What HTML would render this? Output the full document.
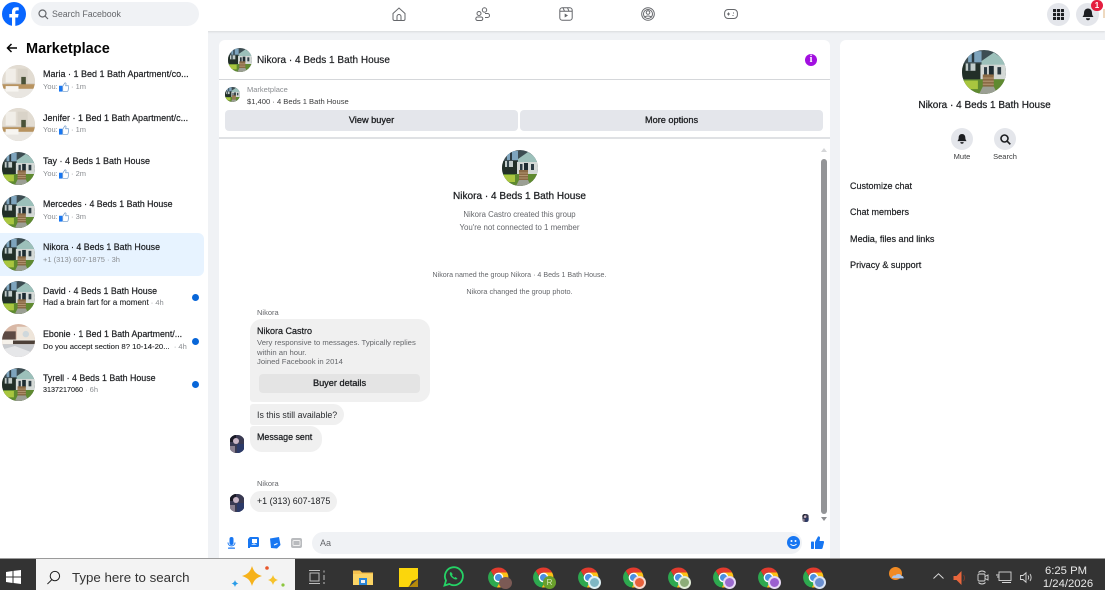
<!DOCTYPE html>
<html><head><meta charset="utf-8"><style>
*{box-sizing:border-box}
html{margin:0;padding:0;width:1105px;height:590px;overflow:hidden;background:#f0f2f5}
body{margin:0;padding:0;width:1105px;height:590px;overflow:hidden;background:#f0f2f5;position:relative;font-family:"Liberation Sans",sans-serif;color:#1c1e21;filter:blur(.3px)}
.a{position:absolute;white-space:nowrap}
.p{position:absolute;background:#fff}
.b{font-weight:400;-webkit-text-stroke:.2px currentColor}
.t{font-size:8.85px;line-height:12px;color:#1c1e21;-webkit-text-stroke:.2px #1c1e21}
.s{font-size:7.5px;line-height:10px;color:#8a8d91}
.s b{font-weight:400;color:#1c1e21;-webkit-text-stroke:.1px #1c1e21}
.c{text-align:center}
.g{color:#65676b}
.av{position:absolute;border-radius:50%;overflow:hidden}
.av svg{display:block;width:100%;height:100%}
.dot{position:absolute;width:7px;height:7px;border-radius:50%;background:#0866d8;left:192px}
.ic{position:absolute;overflow:visible}
.chr{position:absolute;top:567px;width:21px;height:21px}
.btn{font-size:9.2px;-webkit-text-stroke:.3px #1c1e21}
</style></head><body>
<svg width="0" height="0" style="position:absolute"><defs>
<symbol id="house" viewBox="0 0 36 36"><rect width="36" height="36" fill="#3d4d52"/><rect x="5" y="1" width="11" height="9" fill="#7ea4bd"/><rect x="8" y="1" width="2" height="9" fill="#2c3a40"/><path d="M16 9 26 2 36 9V13H16Z" fill="#9cc0ba"/><rect x="15" y="12" width="21" height="12" fill="#d4d9d6"/><rect x="0" y="11" width="15" height="13" fill="#222f28"/><rect x="3" y="11" width="8" height="6" fill="#c2ccca"/><rect x="5" y="11" width="2" height="6" fill="#33444a"/><rect x="18" y="14" width="2.500" height="7" fill="#2d3c44"/><rect x="22" y="13" width="4" height="8" fill="#1e2c32"/><rect x="29" y="14" width="3" height="6" fill="#2d3c44"/><rect y="24" width="36" height="12" fill="#5f8a30"/><rect x="0" y="25" width="13" height="7" fill="#a9c63f"/><rect x="17" y="20" width="9" height="10" fill="#8a6a45"/><path d="M17 23h9M17 25.500h9M17 28h9" stroke="#bda27e" stroke-width=".7"/><path d="M17 30h9l3 6H14Z" fill="#9b9f94"/></symbol>
<symbol id="room" viewBox="0 0 36 36"><rect width="36" height="36" fill="#cfc8bc"/><rect x="0" y="0" width="36" height="20" fill="#e2dcd2"/><rect x="4" y="4" width="11" height="15" fill="#f1eee8"/><rect x="17" y="4" width="11" height="15" fill="#d9d3c8"/><rect x="21" y="13" width="5" height="9" fill="#4a5238"/><rect y="21" width="36" height="5" fill="#b8935f"/><path d="M0 26h36v10H0Z" fill="#e9e6e1"/><rect x="4" y="23" width="14" height="6" fill="#f7f5f1"/></symbol>
<symbol id="room2" viewBox="0 0 36 36"><rect width="36" height="36" fill="#d9b8a6"/><rect x="16" y="3" width="20" height="18" fill="#eee5da"/><rect x="0" y="8" width="15" height="10" fill="#5d4a44"/><circle cx="26" cy="11" r="3.500" fill="#cfd8dc"/><rect x="0" y="17" width="36" height="5" fill="#f5f1ea"/><rect x="12" y="18" width="24" height="4" fill="#4c4038"/><rect y="22" width="36" height="14" fill="#c9ccd0"/><path d="M0 28 14 24 30 30 36 36H0Z" fill="#e6e7e9"/></symbol>
<symbol id="like" viewBox="0 0 12 11"><rect x="0" y="4" width="4" height="7" fill="#1877f2"/><path d="M4.500 4.500 7 .6c1-.3 1.700.4 1.400 1.400L8 4h3c.6 0 .9.500.8 1l-1 5c-.1.400-.4.700-.8.700H4.500Z" fill="#fff" stroke="#6a96c8" stroke-width=".8"/></symbol>
<symbol id="face" viewBox="0 0 14 18"><rect width="14" height="18" fill="#3a3a52"/><rect x="0" y="0" width="6" height="7" fill="#1b1b26"/><circle cx="6" cy="6" r="3" fill="#c9b6c6"/><rect x="7" y="9" width="7" height="9" fill="#2c3a68"/><rect x="0" y="11" width="5" height="7" fill="#8a8090"/></symbol>
<symbol id="chrome" viewBox="0.500 0.500 19 19"><path d="M10 1a9 9 0 0 1 7.800 4.500H10a4.500 4.500 0 0 0-4.200 3L3 4A9 9 0 0 1 10 1Z" fill="#e33b2e"/><path d="M3 4l4.400 7.600A4.500 4.500 0 0 0 11 14.400L8.500 19A9 9 0 0 1 3 4Z" fill="#2da94f"/><path d="M17.800 5.500A9 9 0 0 1 8.500 18.900L13 11a4.500 4.500 0 0 0-3-5.500Z" fill="#fbc116"/><circle cx="10" cy="10" r="3.800" fill="#4a90e2" stroke="#fff" stroke-width="1.200"/></symbol>
</defs></svg>

<!-- top bar -->
<div class="p" style="left:0;top:0;width:1105px;height:31px;box-shadow:0 1px 2px rgba(0,0,0,.1)"></div>
<svg class="ic" style="left:2px;top:2px" width="24" height="24" viewBox="0 0 24 24"><circle cx="12" cy="12" r="12" fill="#0866ff"/><path d="M10 24v-8.500H7.300V12H10v-2.200c0-3 1.500-4.600 4.400-4.600.9 0 1.700.1 2.300.2v3h-1.500c-1.500 0-1.900.8-1.900 1.900V12h3.300l-.6 3.500h-2.700V24Z" fill="#fff"/></svg>
<div class="p" style="left:31px;top:2px;width:168px;height:24px;border-radius:12px;background:#f0f2f5"></div>
<svg class="ic" style="left:38px;top:9px" width="11" height="11" viewBox="0 0 11 11" fill="none" stroke="#65676b" stroke-width="1.200"><circle cx="4.500" cy="4.500" r="3.500"/><path d="M7 7l3 3"/></svg>
<div class="a" style="left:52px;top:8px;font-size:8.800px;line-height:12px;color:#65676b">Search Facebook</div>

<svg class="ic" style="left:392px;top:7px" width="14" height="14" viewBox="0 0 14 14" fill="none" stroke="#65676b" stroke-width="1"><path d="M1 6.500 7 1l6 5.500V12a1.500 1.500 0 0 1-1.500 1.500h-9A1.500 1.500 0 0 1 1 12Z"/><path d="M5 13.500V9.500a2 2 0 0 1 4 0v4"/></svg>
<svg class="ic" style="left:475px;top:7px" width="15" height="14" viewBox="0 0 15 14" fill="none" stroke="#65676b" stroke-width="1"><circle cx="9.500" cy="3" r="2.200"/><circle cx="4" cy="6.500" r="2"/><rect x=".8" y="10" width="7" height="3.500" rx="1.700"/><path d="M10 6.500h2.500a2 2 0 0 1 0 4H10"/></svg>
<svg class="ic" style="left:559px;top:7px" width="14" height="14" viewBox="0 0 14 14" fill="none" stroke="#65676b" stroke-width="1"><rect x=".8" y=".8" width="12.400" height="12.400" rx="2.500"/><path d="M.8 4.200h12.400M4 .8l1.500 3.400M8.500 .8 10 4.200"/><path d="M5.700 6.500v4l3.300-2Z" fill="#65676b" stroke="none"/></svg>
<svg class="ic" style="left:641px;top:7px" width="14" height="14" viewBox="0 0 14 14" fill="none" stroke="#65676b" stroke-width="1"><circle cx="7" cy="7" r="6.300"/><circle cx="7" cy="7" r="4.500"/><circle cx="7" cy="5.500" r="1.800"/><path d="M3.500 10.500c1-2 6-2 7 0"/></svg>
<svg class="ic" style="left:724px;top:8px" width="14" height="12" viewBox="0 0 14 12" fill="none" stroke="#65676b" stroke-width="1"><rect x=".6" y="1.500" width="12.800" height="9" rx="3.500"/><path d="M3 6h3M4.500 4.500v3M9 5h1M8.500 7.500h1"/></svg>

<div class="p" style="left:1047px;top:3px;width:23px;height:23px;border-radius:50%;background:#e4e6eb"></div>
<svg class="ic" style="left:1053px;top:9px" width="11" height="11" viewBox="0 0 10 10" fill="#1c1e21"><rect width="2.800" height="2.800" rx=".4"/><rect x="3.600" width="2.800" height="2.800" rx=".4"/><rect x="7.200" width="2.800" height="2.800" rx=".4"/><rect y="3.600" width="2.800" height="2.800" rx=".4"/><rect x="3.600" y="3.600" width="2.800" height="2.800" rx=".4"/><rect x="7.200" y="3.600" width="2.800" height="2.800" rx=".4"/><rect y="7.200" width="2.800" height="2.800" rx=".4"/><rect x="3.600" y="7.200" width="2.800" height="2.800" rx=".4"/><rect x="7.200" y="7.200" width="2.800" height="2.800" rx=".4"/></svg>
<div class="p" style="left:1076px;top:3px;width:23px;height:23px;border-radius:50%;background:#e4e6eb"></div>
<svg class="ic" style="left:1082px;top:8px" width="12" height="13" viewBox="0 0 12 13"><path d="M6 .5c2.600 0 4 2 4 4.500 0 2 .8 3 1.500 4H.5C1.200 8 2 7 2 5 2 2.500 3.400.500 6 .5Z M4 10.200h4a2 2 0 0 1-4 0Z" fill="#1c1e21"/></svg>
<div class="p c" style="left:1091px;top:0;width:12px;height:11px;border-radius:6px;background:#e41e3f;color:#fff;font-size:8px;line-height:11px;font-weight:700">1</div>
<div class="p" style="left:1103px;top:9px;width:2px;height:9px;background:#eed9c0"></div>

<!-- sidebar -->
<div class="p" style="left:0;top:31px;width:208px;height:527px"></div>
<svg class="ic" style="left:6px;top:43px" width="11" height="10" viewBox="0 0 11 10" fill="none" stroke="#050505" stroke-width="1.500"><path d="M11 5H1.500M5.500 1 1.500 5l4 4"/></svg>
<div class="a b" style="left:26px;top:40px;font-size:14.500px;line-height:18px;color:#050505;font-weight:700;-webkit-text-stroke:0">Marketplace</div>

<div class="av" style="left:2px;top:65px;width:33px;height:33px"><svg><use href="#room"/></svg></div>
<div class="a t" style="left:43px;top:68px;font-size:9px">Maria · 1 Bed 1 Bath Apartment/co...</div>
<div class="a s" style="left:43px;top:82px">You:</div><svg class="ic" style="left:59px;top:82px" width="10" height="10"><use href="#like"/></svg><div class="a s" style="left:71px;top:82px">· 1m</div>

<div class="av" style="left:2px;top:108px;width:33px;height:33px"><svg><use href="#room"/></svg></div>
<div class="a t" style="left:43px;top:112px;font-size:9px">Jenifer · 1 Bed 1 Bath Apartment/c...</div>
<div class="a s" style="left:43px;top:125px">You:</div><svg class="ic" style="left:59px;top:125px" width="10" height="10"><use href="#like"/></svg><div class="a s" style="left:71px;top:125px">· 1m</div>

<div class="av" style="left:2px;top:152px;width:33px;height:33px"><svg><use href="#house"/></svg></div>
<div class="a t" style="left:43px;top:155px;font-size:9px">Tay · 4 Beds 1 Bath House</div>
<div class="a s" style="left:43px;top:169px">You:</div><svg class="ic" style="left:59px;top:169px" width="10" height="10"><use href="#like"/></svg><div class="a s" style="left:71px;top:169px">· 2m</div>

<div class="av" style="left:2px;top:195px;width:33px;height:33px"><svg><use href="#house"/></svg></div>
<div class="a t" style="left:43px;top:198px;font-size:8.800px">Mercedes · 4 Beds 1 Bath House</div>
<div class="a s" style="left:43px;top:212px">You:</div><svg class="ic" style="left:59px;top:212px" width="10" height="10"><use href="#like"/></svg><div class="a s" style="left:71px;top:212px">· 3m</div>

<div class="p" style="left:0;top:233px;width:204px;height:43px;border-radius:0 6px 6px 0;background:#e7f3ff"></div>
<div class="av" style="left:2px;top:238px;width:33px;height:33px"><svg><use href="#house"/></svg></div>
<div class="a t" style="left:43px;top:241px">Nikora · 4 Beds 1 Bath House</div>
<div class="a s" style="left:43px;top:255px">+1 (313) 607-1875 · 3h</div>

<div class="av" style="left:2px;top:281px;width:33px;height:33px"><svg><use href="#house"/></svg></div>
<div class="a t" style="left:43px;top:285px">David · 4 Beds 1 Bath House</div>
<div class="a s" style="left:43px;top:298px"><b style="font-size:8.100px">Had a brain fart for a moment</b> · 4h</div>
<div class="dot" style="top:294px"></div>

<div class="av" style="left:2px;top:324px;width:33px;height:33px"><svg><use href="#room2"/></svg></div>
<div class="a t" style="left:43px;top:328px">Ebonie · 1 Bed 1 Bath Apartment/...</div>
<div class="a s" style="left:43px;top:342px"><b style="font-size:7.750px">Do you accept section 8? 10-14-20...</b> &nbsp;· 4h</div>
<div class="dot" style="top:338px"></div>

<div class="av" style="left:2px;top:368px;width:33px;height:33px"><svg><use href="#house"/></svg></div>
<div class="a t" style="left:43px;top:372px">Tyrell · 4 Beds 1 Bath House</div>
<div class="a s" style="left:43px;top:385px"><b style="font-size:7.200px">3137217060</b> · 6h</div>
<div class="dot" style="top:381px"></div>

<!-- main panel -->
<div class="p" style="left:219px;top:40px;width:611px;height:518px;border-radius:6px 6px 0 0"></div>
<div class="av" style="left:228px;top:48px;width:24px;height:24px"><svg><use href="#house"/></svg></div>
<div class="a" style="left:257px;top:54px;font-size:10.050px;line-height:13px;-webkit-text-stroke:.2px #1c1e21">Nikora · 4 Beds 1 Bath House</div>
<div class="p" style="left:805px;top:54px;width:12px;height:12px;border-radius:50%;background:#a20fe0"></div>
<div class="a c" style="left:805px;top:54px;width:12px;font-size:10px;line-height:12px;color:#fff;font-weight:700;font-family:'Liberation Serif',serif">i</div>
<div class="p" style="left:219px;top:79px;width:611px;height:1px;background:#d5d7da"></div>
<div class="av" style="left:225px;top:87px;width:15px;height:15px"><svg><use href="#house"/></svg></div>
<div class="a" style="left:247px;top:85px;font-size:7.500px;line-height:10px;color:#8a8d91">Marketplace</div>
<div class="a" style="left:247px;top:96px;font-size:7.600px;line-height:11px;color:#3a3b3c">$1,400 · 4 Beds 1 Bath House</div>
<div class="p c btn" style="left:225px;top:110px;width:293px;height:21px;border-radius:4px;background:#e4e6eb;line-height:21px">View buyer</div>
<div class="p c btn" style="left:520px;top:110px;width:303px;height:21px;border-radius:4px;background:#e4e6eb;line-height:21px">More options</div>
<div class="p" style="left:219px;top:137px;width:611px;height:2px;background:#dfe1e4"></div>

<div class="av" style="left:502px;top:150px;width:36px;height:36px"><svg><use href="#house"/></svg></div>
<div class="a c" style="left:219px;top:190px;width:601px;font-size:10.050px;line-height:14px;-webkit-text-stroke:.25px #1c1e21">Nikora · 4 Beds 1 Bath House</div>
<div class="a c g" style="left:219px;top:209px;width:601px;font-size:7.800px;line-height:11px">Nikora Castro created this group</div>
<div class="a c g" style="left:219px;top:222px;width:601px;font-size:7.900px;line-height:11px">You're not connected to 1 member</div>
<div class="a c g" style="left:219px;top:270px;width:601px;font-size:7.100px;line-height:10px">Nikora named the group Nikora · 4 Beds 1 Bath House.</div>
<div class="a c g" style="left:219px;top:287px;width:601px;font-size:7.300px;line-height:10px">Nikora changed the group photo.</div>

<div class="a g" style="left:257px;top:308px;font-size:7.500px;line-height:10px">Nikora</div>
<div class="p" style="left:250px;top:319px;width:180px;height:83px;border-radius:12px 12px 12px 3px;background:#f0f0f0"></div>
<div class="a" style="left:257px;top:325px;font-size:9px;line-height:12px;-webkit-text-stroke:.25px #1c1e21">Nikora Castro</div>
<div class="a g" style="left:257px;top:338px;font-size:7.700px;line-height:9.500px">Very responsive to messages. Typically replies<br>within an hour.<br>Joined Facebook in 2014</div>
<div class="p c btn" style="left:259px;top:374px;width:161px;height:19px;border-radius:4px;background:#e4e4e4;line-height:19px">Buyer details</div>
<div class="p" style="left:250px;top:404px;width:94px;height:21px;border-radius:3px 11px 11px 3px;background:#f0f0f0"></div>
<div class="a" style="left:257px;top:409px;font-size:8.800px;line-height:12px;color:#2b2d30">Is this still available?</div>
<div class="p" style="left:250px;top:426px;width:72px;height:26px;border-radius:3px 12px 12px 12px;background:#f0f0f0"></div>
<div class="a" style="left:257px;top:431px;font-size:8.900px;line-height:12px;-webkit-text-stroke:.25px #1c1e21">Message sent</div>
<div class="av" style="left:229px;top:435px;width:16px;height:18px;border-radius:45%"><svg><use href="#face"/></svg></div>

<div class="a g" style="left:257px;top:479px;font-size:7.500px;line-height:10px">Nikora</div>
<div class="p" style="left:250px;top:491px;width:87px;height:21px;border-radius:11px;background:#f0f0f0"></div>
<div class="a" style="left:257px;top:495px;font-size:8.900px;line-height:12px;color:#1c1e21">+1 (313) 607-1875</div>
<div class="av" style="left:229px;top:494px;width:16px;height:18px;border-radius:45%"><svg><use href="#face"/></svg></div>

<!-- scrollbar -->
<div class="p" style="left:821px;top:159px;width:6px;height:355px;border-radius:3px;background:#939496"></div>
<div class="a" style="left:821px;top:148px;width:0;height:0;border:3px solid transparent;border-bottom:4px solid #d5d6d8;border-top:0"></div>
<div class="a" style="left:821px;top:517px;width:0;height:0;border:3px solid transparent;border-top:4px solid #8d8e90;border-bottom:0"></div>
<div class="av" style="left:802px;top:514px;width:7px;height:8px;border-radius:40%"><svg><use href="#face"/></svg></div>

<!-- composer -->
<svg class="ic" style="left:227px;top:537px" width="9" height="12" viewBox="0 0 9 12" fill="#1877f2"><rect x="2.500" width="4" height="8" rx="2"/><path d="M1 5.500c0 4.500 7 4.500 7 0" fill="none" stroke="#1877f2"/><rect x="1" y="10.500" width="7" height="1.300" rx=".6"/></svg>
<svg class="ic" style="left:248px;top:537px" width="11" height="11" viewBox="0 0 11 11"><rect x="1" width="10" height="10" rx="1.500" fill="#1877f2"/><rect x="0" y="1.500" width="2" height="9.500" fill="#1877f2"/><rect x="4" y="2" width="5" height="4" fill="#fff"/><path d="M3 8l3-2 3 2" fill="#bcd8fb"/></svg>
<svg class="ic" style="left:269px;top:537px" width="12" height="12" viewBox="0 0 12 12"><path d="M1 1.500 10 0l1.500 8L8 11.500 2 11Z" fill="#1877f2"/><path d="M5 5.500h.01M8 4.500h.01M5 8l3.500-1.500" stroke="#fff" stroke-width="1" fill="none"/></svg>
<svg class="ic" style="left:291px;top:538px" width="11" height="10" viewBox="0 0 11 10"><rect width="11" height="10" rx="2" fill="#b9bbbe"/><rect x="2" y="2.500" width="7" height="5" rx="1" fill="none" stroke="#f0f0f0" stroke-width=".9"/></svg>
<div class="p" style="left:312px;top:532px;width:490px;height:22px;border-radius:11px;background:#f0f2f5"></div>
<div class="a" style="left:320px;top:537px;font-size:9px;line-height:12px;color:#65676b">Aa</div>
<svg class="ic" style="left:787px;top:536px" width="13" height="13" viewBox="0 0 13 13"><circle cx="6.500" cy="6.500" r="6.500" fill="#1877f2"/><circle cx="4.500" cy="5" r="1" fill="#fff"/><circle cx="8.500" cy="5" r="1" fill="#fff"/><path d="M3.500 8c1.500 2 4.500 2 6 0" stroke="#fff" fill="none"/></svg>
<svg class="ic" style="left:811px;top:536px" width="13" height="13" viewBox="0 0 13 13" fill="#1877f2"><rect x="0" y="5.500" width="3" height="7.500" rx=".8"/><path d="M4 6 7 .5c1.300-.5 2.300.5 2 1.800L8.500 5H12c.8 0 1.200.7 1 1.400l-1.400 5.600c-.2.600-.6 1-1.200 1H4Z"/></svg>

<!-- right panel -->
<div class="p" style="left:840px;top:40px;width:265px;height:518px;border-radius:6px 0 0 0"></div>
<div class="av" style="left:962px;top:50px;width:44px;height:44px"><svg><use href="#house"/></svg></div>
<div class="a c" style="left:840px;top:99px;width:289px;font-size:10px;line-height:13px;-webkit-text-stroke:.25px #1c1e21">Nikora · 4 Beds 1 Bath House</div>
<div class="p" style="left:951px;top:128px;width:22px;height:22px;border-radius:50%;background:#e4e6eb"></div>
<svg class="ic" style="left:957px;top:133px" width="10" height="12" viewBox="0 0 12 13"><path d="M6 .5c2.600 0 4 2 4 4.500 0 2 .8 3 1.500 4H.5C1.200 8 2 7 2 5 2 2.500 3.400.500 6 .5Z M4 10.200h4a2 2 0 0 1-4 0Z" fill="#1c1e21"/></svg>
<div class="p" style="left:994px;top:128px;width:22px;height:22px;border-radius:50%;background:#e4e6eb"></div>
<svg class="ic" style="left:1000px;top:134px" width="11" height="11" viewBox="0 0 11 11" fill="none" stroke="#1c1e21" stroke-width="1.600"><circle cx="4.500" cy="4.500" r="3.500"/><path d="M7 7l3.300 3.300"/></svg>
<div class="a c" style="left:941px;top:152px;width:42px;font-size:7.500px;line-height:10px;color:#3a3b3c">Mute</div>
<div class="a c" style="left:984px;top:152px;width:42px;font-size:7.500px;line-height:10px;color:#3a3b3c">Search</div>
<div class="a t" style="left:850px;top:180px;font-size:9px">Customize chat</div>
<div class="a t" style="left:850px;top:206px;font-size:9px">Chat members</div>
<div class="a t" style="left:850px;top:233px;font-size:9.100px">Media, files and links</div>
<div class="a t" style="left:850px;top:259px;font-size:9.100px">Privacy &amp; support</div>

<!-- taskbar -->
<div class="p" style="left:0;top:558px;width:1105px;height:32px;background:#333;border-top:1px solid #9a9a9a"></div>
<svg class="ic" style="left:6px;top:570px" width="15" height="14" viewBox="0 0 15 14" fill="#fff"><path d="M0 2 6.500 1v5.500H0ZM7.500 .9 15 0v6.500H7.500ZM0 7.500h6.500V13L0 12ZM7.500 7.500H15V14l-7.500-1Z"/></svg>
<div class="p" style="left:36px;top:559px;width:259px;height:31px;background:#f3f3f3"></div>
<svg class="ic" style="left:46px;top:570px" width="15" height="15" viewBox="0 0 16 16" fill="none" stroke="#222" stroke-width="1.100"><circle cx="9.500" cy="6.500" r="5"/><path d="M6 10.500 1.500 15"/></svg>
<div class="a" style="left:72px;top:570px;font-size:13.300px;line-height:16px;color:#333">Type here to search</div>
<svg class="ic" style="left:230px;top:564px" width="60" height="26" viewBox="0 0 60 26"><path d="M22 2c2 6 4 8 10 10-6 2-8 4-10 10-2-6-4-8-10-10 6-2 8-4 10-10Z" fill="#f6b21b"/><path d="M43 11c1 3 2 4 5 5-3 1-4 2-5 5-1-3-2-4-5-5 3-1 4-2 5-5Z" fill="#f6c22b"/><path d="M5 16c.7 2.200 1.300 2.800 3.500 3.500-2.200.7-2.800 1.300-3.500 3.500-.7-2.200-1.300-2.800-3.500-3.500C3.700 18.800 4.300 18.200 5 16Z" fill="#2a9ce8"/><circle cx="37" cy="4" r="1.800" fill="#e8562a"/><circle cx="53" cy="21" r="1.600" fill="#8cc63e"/></svg>
<svg class="ic" style="left:309px;top:570px" width="17" height="15" viewBox="0 0 17 15" fill="none" stroke="#bdbdbd" stroke-width="1"><rect x="1" y="3" width="9" height="8"/><path d="M0 .5h11M0 13.500h11M15 .5v2M15 5v5M15 12v2"/></svg>
<svg class="ic" style="left:353px;top:569px" width="20" height="17" viewBox="0 0 20 17"><path d="M0 1.500h7l2 2h11V16H0Z" fill="#f5c14e"/><rect x="0" y="5" width="20" height="11" fill="#fbd465"/><rect x="6" y="9" width="8" height="7" fill="#2a86d8"/><rect x="8" y="11" width="4" height="3" fill="#f3f3f3"/></svg>
<svg class="ic" style="left:399px;top:568px" width="19" height="19" viewBox="0 0 19 19"><rect width="19" height="19" fill="#fbd60c"/><path d="M19 10v9H9l5-5Z" fill="#b68a0b"/><path d="M10 19l3-6 6-2" fill="#3a3a3a"/></svg>
<svg class="ic" style="left:443px;top:566px" width="21" height="21" viewBox="0 0 21 21" fill="none"><path d="M1.500 19.500 3 14.500a9 9 0 1 1 3.400 3.500Z" stroke="#25d366" stroke-width="1.800"/><path d="M7 6.500c-.8 1.500.5 4 2.500 5.500s4 2 5 .8l-1.800-1.800-1.300.7c-1-.4-2-1.500-2.400-2.400l.7-1.200L8 6Z" fill="#25d366"/></svg>

<svg class="chr" style="left:488px"><use href="#chrome"/></svg><div class="av" style="left:499px;top:577px;width:13px;height:12px;background:#7b5a55"></div>
<svg class="chr" style="left:533px"><use href="#chrome"/></svg><div class="av c" style="left:543px;top:576px;width:13px;height:13px;background:#6aa02c;color:#d5e8b8;font-size:8px;line-height:13px">R</div>
<svg class="chr" style="left:578px"><use href="#chrome"/></svg><div class="av" style="left:588px;top:576px;width:13px;height:13px;background:#7fb7c4;border:2px solid #dff0f4"></div>
<svg class="chr" style="left:623px"><use href="#chrome"/></svg><div class="av" style="left:633px;top:576px;width:13px;height:13px;background:#e8613c;border:2px solid #f8d9cf"></div>
<svg class="chr" style="left:668px"><use href="#chrome"/></svg><div class="av" style="left:678px;top:576px;width:13px;height:13px;background:#8cac78;border:2px solid #e2ecd9"></div>
<svg class="chr" style="left:713px"><use href="#chrome"/></svg><div class="av" style="left:723px;top:576px;width:13px;height:13px;background:#9b6bd0;border:2px solid #e7daf5"></div>
<svg class="chr" style="left:758px"><use href="#chrome"/></svg><div class="av" style="left:768px;top:576px;width:13px;height:13px;background:#9b5fd0;border:2px solid #e7daf5"></div>
<svg class="chr" style="left:803px"><use href="#chrome"/></svg><div class="av" style="left:813px;top:576px;width:13px;height:13px;background:#6a8fd0;border:2px solid #d9e4f5"></div>

<svg class="ic" style="left:889px;top:567px" width="15" height="14" viewBox="0 0 15 14"><circle cx="6.500" cy="6.500" r="6.500" fill="#f08a24"/><path d="M3 11c0-2 2-3 3.500-2.500C7.500 6.500 12 6.500 12.500 9c1.500 0 2.500 1 2 2.500Z" fill="#a9c4ea"/></svg>
<svg class="ic" style="left:933px;top:573px" width="11" height="6" viewBox="0 0 11 6" fill="none" stroke="#d8d8d8"><path d="M.5 5.500 5.500 .8l5 4.700"/></svg>
<svg class="ic" style="left:953px;top:571px" width="14" height="14" viewBox="0 0 13 14"><path d="M0 5h3l5-5v14L3 9H0Z" fill="#e8663c"/><path d="M10 4c1.500 2 1.500 4 0 6" stroke="#7a3a28" fill="none"/></svg>
<svg class="ic" style="left:977px;top:570px" width="13" height="14" viewBox="0 0 13 14" fill="none" stroke="#d8d8d8" stroke-width=".9"><rect x="1" y="4" width="7" height="7" rx="1"/><path d="M8 6.500l3-1.500v5l-3-1.500"/><path d="M1.500 2.500c2-2 5-2 7 0M1.500 12.500c2 2 5 2 7 0"/></svg>
<svg class="ic" style="left:996px;top:571px" width="16" height="13" viewBox="0 0 16 13" fill="none" stroke="#d8d8d8" stroke-width=".9"><rect x="3" y="1" width="12" height="8.500"/><path d="M6 11.500h9M0 4h3M1 6h2"/></svg>
<svg class="ic" style="left:1020px;top:572px" width="13" height="11" viewBox="0 0 13 11" fill="none" stroke="#d8d8d8" stroke-width=".9"><path d="M.5 3.500h2.500L6 .8v9.400L3 7.500H.5Z"/><path d="M8 3.500c.8 1.200.8 2.800 0 4M10 2c1.500 2 1.500 5 0 7"/></svg>
<div class="a c" style="left:1033px;top:565px;width:66px;font-size:11.300px;line-height:12px;color:#e8e8e8">6:25 PM</div>
<div class="a c" style="left:1035px;top:578px;width:66px;font-size:11.300px;line-height:12px;color:#e8e8e8">1/24/2026</div>
</body></html>
